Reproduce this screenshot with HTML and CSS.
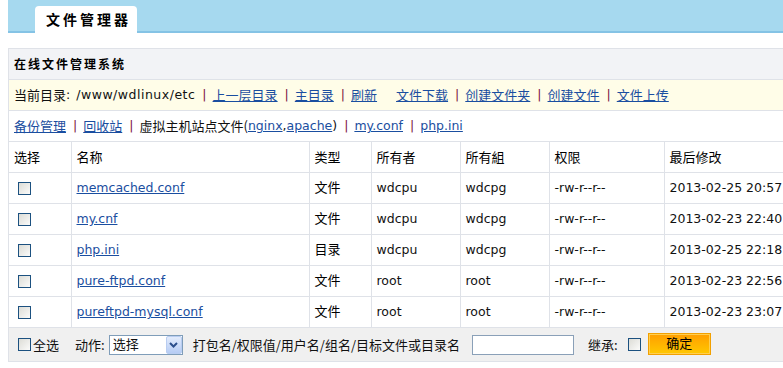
FILE: index.html
```html
<!DOCTYPE html>
<html lang="zh-CN">
<head>
<meta charset="utf-8">
<title>文件管理器</title>
<link rel="stylesheet" href="styles.css">
</head>
<body>
<div class="top">
  <div class="tab">文件管理器</div>
</div>
<div class="panel">
  <div class="bar title">在线文件管理系统</div>
  <div class="bar path">
    <span class="zh">当前目录</span><span>:</span><span class="dir">/www/wdlinux/etc</span><span class="sep">|</span><a class="zh" href="#">上一层目录</a><span class="sep">|</span><a class="zh" href="#">主目录</a><span class="sep">|</span><a class="zh" href="#">刷新</a><a class="zh far" href="#">文件下载</a><span class="sep">|</span><a class="zh" href="#">创建文件夹</a><span class="sep">|</span><a class="zh" href="#">创建文件</a><span class="sep">|</span><a class="zh" href="#">文件上传</a>
  </div>
  <div class="bar links">
    <a class="zh" href="#">备份管理</a><span class="sep">|</span><a class="zh" href="#">回收站</a><span class="sep">|</span><span class="zh">虚拟主机站点文件(</span><a href="#">nginx</a><span>,</span><a href="#">apache</a><span>)</span><span class="sep">|</span><a href="#">my.conf</a><span class="sep">|</span><a href="#">php.ini</a>
  </div>
  <table class="files">
    <colgroup>
      <col class="c1"><col class="c2"><col class="c3"><col class="c4"><col class="c5"><col class="c6"><col class="c7">
    </colgroup>
    <thead>
      <tr><th>选择</th><th>名称</th><th>类型</th><th>所有者</th><th>所有組</th><th>权限</th><th>最后修改</th></tr>
    </thead>
    <tbody>
      <tr><td><span class="cb"></span></td><td><a href="#">memcached.conf</a></td><td class="zh">文件</td><td>wdcpu</td><td>wdcpg</td><td>-rw-r--r--</td><td>2013-02-25 20:57</td></tr>
      <tr><td><span class="cb"></span></td><td><a href="#">my.cnf</a></td><td class="zh">文件</td><td>wdcpu</td><td>wdcpg</td><td>-rw-r--r--</td><td>2013-02-23 22:40</td></tr>
      <tr><td><span class="cb"></span></td><td><a href="#">php.ini</a></td><td class="zh">目录</td><td>wdcpu</td><td>wdcpg</td><td>-rw-r--r--</td><td>2013-02-25 22:18</td></tr>
      <tr><td><span class="cb"></span></td><td><a href="#">pure-ftpd.conf</a></td><td class="zh">文件</td><td>root</td><td>root</td><td>-rw-r--r--</td><td>2013-02-23 22:56</td></tr>
      <tr><td><span class="cb"></span></td><td><a href="#">pureftpd-mysql.conf</a></td><td class="zh">文件</td><td>root</td><td>root</td><td>-rw-r--r--</td><td>2013-02-23 23:07</td></tr>
    </tbody>
  </table>
  <div class="foot">
    <span class="cb"></span><span class="zh all">全选</span>
    <span class="zh act">动作:</span>
    <div class="sel"><span class="zh">选择</span><span class="drop"><svg width="9" height="6" viewBox="0 0 9 6"><path d="M1 1 L4.5 4.5 L8 1" fill="none" stroke="#2c4f8c" stroke-width="2"/></svg></span></div>
    <span class="zh hint">打包名/权限值/用户名/组名/目标文件或目录名</span>
    <span class="inp"></span>
    <span class="zh inh">继承:</span>
    <span class="cb cb2"></span>
    <span class="btn zh">确定</span>
  </div>
</div>
</body>
</html>
```
FILE: styles.css
```css
html, body {
  overflow: hidden;
}
body {
  margin: 0 0 0 8px;
  background: #fff;
  color: #111;
  font: 12.5px/16px "DejaVu Sans", "Noto Sans CJK SC", sans-serif;
}
.zh {
  font-family: "Noto Sans CJK SC", sans-serif;
  font-size: 13px;
}
a {
  color: #1a4ea0;
  text-decoration: underline;
}
.top {
  height: 31px;
  background: #a6d9ef;
  border-bottom: 2px solid #85c3e5;
  display: flex;
  align-items: flex-end;
  padding-left: 27px;
}
.tab {
  box-sizing: border-box;
  width: 102px;
  height: 27px;
  margin-bottom: -2px;
  padding-left: 11px;
  background: #fff;
  border-radius: 4px 4px 0 0;
  font: bold 14px/27px "Noto Sans CJK SC", sans-serif;
  letter-spacing: 3px;
  color: #000;
}
.panel {
  margin-top: 15px;
  width: 790px;
  border-left: 1px solid #dfe2e8;
  border-top: 1px solid #dfe2e8;
}
.bar {
  height: 30px;
  border-bottom: 1px solid #dfe2e8;
  display: flex;
  align-items: center;
  padding-left: 5px;
  white-space: nowrap;
}
.title {
  background: #f2f3f6;
  font: bold 12px/16px "Noto Sans CJK SC", sans-serif;
  letter-spacing: 2px;
  color: #000;
}
.path {
  background: #fffde8;
}
.dir {
  margin-left: 6px;
  letter-spacing: 0.5px;
}
.sep {
  color: #7a1142;
  margin: 0 6px 0 7px;
}
.far {
  margin-left: 19px;
}
.files {
  border-collapse: collapse;
  table-layout: fixed;
  width: 790px;
}
.c1 { width: 62px; }
.c2 { width: 238px; }
.c3 { width: 62px; }
.c4 { width: 89px; }
.c5 { width: 89px; }
.c6 { width: 115px; }
.c7 { width: 135px; }
.files th,
.files td {
  height: 30px;
  padding: 0 5px;
  border-right: 1px solid #dfe2e8;
  border-bottom: 1px solid #dfe2e8;
  text-align: left;
  white-space: nowrap;
  vertical-align: middle;
}
.files th {
  font-weight: normal;
  font-family: "Noto Sans CJK SC", sans-serif;
  font-size: 13px;
  color: #000;
}
.files td.zh {
  height: 27px;
  padding-bottom: 3px;
  color: #000;
}
.cb {
  display: inline-block;
  box-sizing: border-box;
  width: 13px;
  height: 13px;
  margin-left: 4px;
  vertical-align: middle;
  border: 1px solid #1c5180;
  background: linear-gradient(135deg, #dcdcd6, #fbfbfa);
}
.foot {
  height: 33px;
  background: #f0f0f0;
  border-bottom: 1px solid #dfe2e8;
  display: flex;
  align-items: center;
  padding-left: 5px;
  white-space: nowrap;
}
.all {
  margin-left: 2px;
}
.act {
  margin-left: 16px;
}
.sel {
  box-sizing: border-box;
  width: 74px;
  height: 20px;
  margin-left: 4px;
  border: 1px solid #7f9db9;
  background: #fff;
  display: flex;
  align-items: flex-start;
  justify-content: space-between;
  padding-left: 3px;
}
.sel .zh {
  line-height: 16px;
}
.drop {
  box-sizing: border-box;
  width: 16px;
  height: 18px;
  border: 1px solid #b9cdf1;
  border-radius: 2px;
  background: linear-gradient(#e3ecfc, #b6ccf4);
  display: flex;
  align-items: center;
  justify-content: center;
}
.hint {
  margin-left: 10px;
}
.inp {
  box-sizing: border-box;
  width: 102px;
  height: 20px;
  margin-left: 12px;
  border: 1px solid #8aa0b8;
  background: #fff;
}
.inh {
  margin-left: 14px;
}
.cb2 {
  margin-left: 10px;
}
.btn {
  box-sizing: border-box;
  width: 63px;
  height: 22px;
  margin-left: 7px;
  margin-top: -1px;
  border: 1px solid #f2a000;
  box-shadow: inset 0 0 0 1px #ffcf50;
  background: linear-gradient(#ff9e00, #ffc800);
  color: #000;
  text-align: center;
  line-height: 17px;
}
```
